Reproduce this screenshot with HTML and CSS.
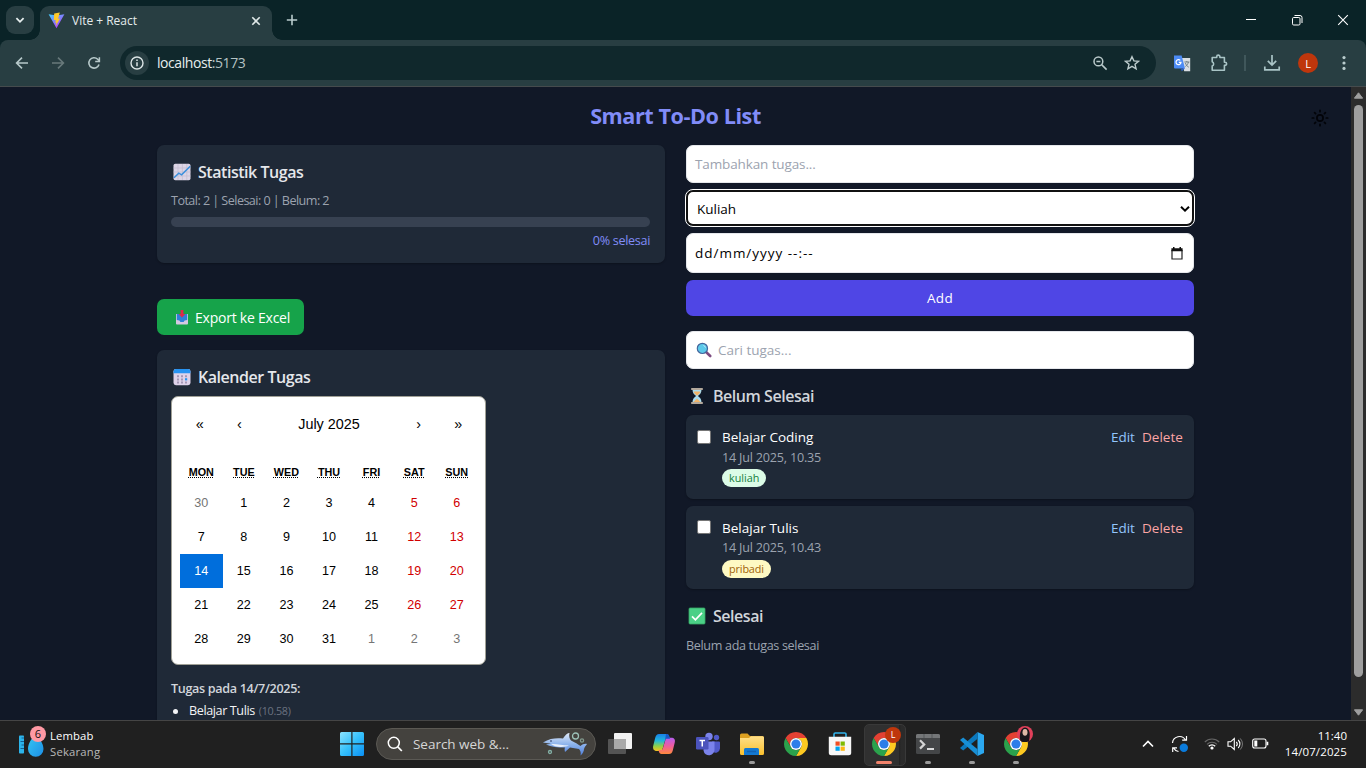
FILE: index.html
```html
<!DOCTYPE html>
<html lang="id">
<head>
<meta charset="utf-8">
<title>Vite + React</title>
<link rel="stylesheet" href="styles.css">
</head>
<body>
<svg class="defs" aria-hidden="true">
  <defs>
    <linearGradient id="win" x1="0" y1="0" x2="1" y2="1"><stop offset="0" stop-color="#8be4ff"/><stop offset=".5" stop-color="#35c0fb"/><stop offset="1" stop-color="#0a8ff5"/></linearGradient>
    <linearGradient id="vite" x1="0" y1="0" x2=".7" y2="1"><stop offset="0" stop-color="#41d1ff"/><stop offset="1" stop-color="#bd34fe"/></linearGradient>
    <linearGradient id="folder" x1="0" y1="0" x2="0" y2="1"><stop offset="0" stop-color="#ffe08a"/><stop offset="1" stop-color="#fbc02d"/></linearGradient>
    <linearGradient id="copA" x1="0" y1="0" x2="0" y2="1"><stop offset="0" stop-color="#1780e8"/><stop offset=".4" stop-color="#21b8dc"/><stop offset=".7" stop-color="#8bd04c"/><stop offset="1" stop-color="#f6c21c"/></linearGradient>
    <linearGradient id="copB" x1="0" y1="0" x2="0" y2="1"><stop offset="0" stop-color="#b55df0"/><stop offset=".5" stop-color="#ef5c9f"/><stop offset="1" stop-color="#ff8a3c"/></linearGradient>
    <linearGradient id="shark" x1="0" y1="0" x2="0" y2="1"><stop offset="0" stop-color="#dfe9f8"/><stop offset=".5" stop-color="#8eb4ec"/><stop offset="1" stop-color="#4f7fdb"/></linearGradient>
    <linearGradient id="drop" x1="0" y1="0" x2="1" y2="1"><stop offset="0" stop-color="#37c8f2"/><stop offset="1" stop-color="#1c8ee6"/></linearGradient>
    <symbol id="chrome" viewBox="0 0 24 24">
      <path fill="#e34133" d="M12 6h10.39A12 12 0 0 0 1.61 6L6.8 15A6 6 0 0 1 12 6z"/>
      <path fill="#fdc921" d="M22.39 6H12a6 6 0 0 1 5.2 9L12 24A12 12 0 0 0 22.39 6z"/>
      <path fill="#2ba24c" d="M6.8 15L1.61 6A12 12 0 0 0 12 24l5.2-9A6 6 0 0 1 6.8 15z"/>
      <circle cx="12" cy="12" r="6" fill="#fff"/><circle cx="12" cy="12" r="4.6" fill="#2d7de9"/>
    </symbol>
  </defs>
</svg>

<header class="tabstrip">
  <button class="tab-search"><svg width="10" height="10" viewBox="0 0 10 10"><path d="M1.4 3.2L5 6.8l3.6-3.6" fill="none" stroke="#e6eeee" stroke-width="1.8"/></svg></button>
  <div class="tab">
    <svg width="17" height="17" viewBox="0 0 17 17"><path d="M.6 2.2L8.5 16.3 16.4 2.2 8.6 3.6z" fill="url(#vite)"/><path d="M11.8.4L6.2 1.5l-.4 6.7 2-.4-.6 3 1.3-.4-.8 3.9 4.3-7.8-1.9.3z" fill="#ffc928"/></svg>
    <span class="tab-title">Vite + React</span>
    <svg class="tab-close" width="10" height="10" viewBox="0 0 10 10"><path d="M1.3 1.3l7.4 7.4M8.7 1.3L1.3 8.7" stroke="#dfe8e8" stroke-width="1.6"/></svg>
  </div>
  <svg class="new-tab" width="12" height="12" viewBox="0 0 12 12"><path d="M6 .8v10.4M.8 6h10.4" stroke="#b9cccd" stroke-width="1.6"/></svg>
  <div class="win-buttons">
    <svg width="46" height="40" viewBox="0 0 46 40"><path d="M18 19.5h10" stroke="#fff"/></svg>
    <svg width="46" height="40" viewBox="0 0 46 40"><rect x="18.5" y="17.5" width="7.5" height="7.5" rx="1.2" fill="none" stroke="#fff"/><path d="M20.5 15.5h5.5a2 2 0 0 1 2 2v5.5" fill="none" stroke="#fff"/></svg>
    <svg width="46" height="40" viewBox="0 0 46 40"><path d="M18.2 15.2l9.6 9.6M27.8 15.2l-9.6 9.6" stroke="#fff" stroke-width="1.1"/></svg>
  </div>
</header>

<nav class="toolbar">
  <svg class="tool" width="36" height="36" viewBox="0 0 36 36"><path d="M24 18H13M18 12.6L12.6 18l5.4 5.4" fill="none" stroke="#b7c9ca" stroke-width="1.6"/></svg>
  <svg class="tool" width="36" height="36" viewBox="0 0 36 36"><path d="M12 18h11M18 12.6l5.4 5.4-5.4 5.4" fill="none" stroke="#68797b" stroke-width="1.6"/></svg>
  <svg class="tool" width="36" height="36" viewBox="0 0 36 36"><path d="M23 19.5a5.2 5.2 0 1 1-1.3-5.3l1.3 1.4" fill="none" stroke="#b7c9ca" stroke-width="1.6"/><path d="M23.4 12.2v4.2h-4.2" fill="none" stroke="#b7c9ca" stroke-width="1.5"/></svg>
  <div class="omnibox">
    <span class="site-info"><svg width="14" height="14" viewBox="0 0 14 14"><circle cx="7" cy="7" r="6" fill="none" stroke="#dce5e6" stroke-width="1.4"/><path d="M7 6.2v4M7 3.6v1.5" stroke="#dce5e6" stroke-width="1.5"/></svg></span>
    <span class="url">localhost<i>:5173</i></span>
    <svg class="zoomed" width="16" height="16" viewBox="0 0 16 16"><circle cx="6.4" cy="6.4" r="4.4" fill="none" stroke="#b9c9ca" stroke-width="1.5"/><path d="M9.600 9.600l5 5M4.400 6.400h4" stroke="#b9c9ca" stroke-width="1.5"/></svg>
    <svg class="star" width="16" height="16" viewBox="0 0 16 16"><path d="M8 1.700l1.900 4.200 4.600.4-3.500 3 1.100 4.500L8 11.400l-4.100 2.400L5 9.300l-3.500-3 4.600-.4z" fill="none" stroke="#bdcccd" stroke-width="1.400"/></svg>
  </div>
  <svg class="ext-translate" width="17" height="17" viewBox="0 0 17 17"><path d="M7 3h9.200v13.200h-6z" fill="#d9dee2"/><path d="M0 .6h7.600L11 13.400H1a1 1 0 0 1-1-1z" fill="#4c8bf5"/><path d="M11 13.400l-3.300 2.800-.8-2.800z" fill="#2b5fc4"/><path d="M6.300 5.400A2.500 2.500 0 1 0 7 7.400H4.800" fill="none" stroke="#fff" stroke-width="1.200"/><path d="M10.400 7h5M12.800 6v1M14.400 7c-.4 2-1.600 3.600-3 4.400M11.400 8c.6 2 2 3.500 3.400 4.200" fill="none" stroke="#66777d" stroke-width=".9"/></svg>
  <svg class="ext-puzzle" width="18" height="18" viewBox="0 0 18 18"><path d="M2.200 3.500h4.500v-.8a1.600 1.600 0 0 1 3.200 0v.8h4.500v4.700h.6a1.600 1.600 0 0 1 0 3.200h-.6v4.800H2.200v-4.100a2.400 2.400 0 0 0 0-4.400z" fill="none" stroke="#a9c4c6" stroke-width="1.600" stroke-linejoin="round"/></svg>
  <span class="divider"></span>
  <svg class="download" width="18" height="18" viewBox="0 0 18 18"><path d="M9 1v9.600M4.800 6.800L9 11l4.200-4.200M1.800 12.500v3.300h14.400v-3.300" fill="none" stroke="#a9c4c6" stroke-width="1.700"/></svg>
  <span class="avatar">L</span>
  <svg class="kebab" width="4" height="16" viewBox="0 0 4 16" fill="#b9cccd"><circle cx="2" cy="2.600" r="1.600"/><circle cx="2" cy="8" r="1.600"/><circle cx="2" cy="13.400" r="1.600"/></svg>
</nav>

<div class="viewport">
  <main class="page">
    <h1>Smart To-Do List</h1>
    <svg class="theme" width="18" height="18" viewBox="0 0 18 18" fill="none" stroke="#020308" stroke-width="1.700" stroke-linecap="round"><circle cx="9" cy="9" r="3.100"/><path d="M9 1.300v1.400M9 15.300v1.400M1.300 9h1.400M15.300 9h1.400M3.600 3.600l1 1M13.400 13.400l1 1M3.600 14.400l1-1M13.400 4.600l1-1"/></svg>
    <div class="columns">
      <section class="col">
        <div class="card stats">
          <h2><svg width="18" height="18" viewBox="0 0 18 18"><rect x=".5" y=".8" width="17" height="16.400" rx="1.800" fill="#dcd5e6"/><path d="M5 1v16M9.400 1v16M13.800 1v16M.5 5h17M.5 9h17M.5 13h17" stroke="#c3bbd0" stroke-width=".7"/><path d="M1 14.800l4.800-4.600 2.800 1.600 8.600-8.600" fill="none" stroke="#3a8fdc" stroke-width="1.500"/></svg><span>Statistik Tugas</span></h2>
          <p class="totals">Total: 2 | Selesai: 0 | Belum: 2</p>
          <div class="progress"></div>
          <p class="percent">0% selesai</p>
        </div>
        <button class="export"><svg width="14" height="16" viewBox="0 0 14 16"><path d="M1 5h12v9.600a.9.900 0 0 1-.9.900H1.900a.9.900 0 0 1-.9-.9z" fill="#d3c8e2"/><path d="M1.800 5h10.400v6l-2.600.4-1 1.600H5.400l-1-1.600-2.600-.4z" fill="#2e80d8"/><path d="M5.600 1h2.800v4h1.900L7 8.400 3.700 5h1.900z" fill="#e0284c"/></svg><span>Export ke Excel</span></button>
        <div class="card agenda">
          <h2><svg width="18" height="18" viewBox="0 0 18 18"><rect x=".5" y="1" width="17" height="16.200" rx="2.400" fill="#ded2ea"/><path d="M.5 5.200V3.400A2.400 2.400 0 0 1 2.900 1h12.200a2.400 2.400 0 0 1 2.400 2.400v1.800z" fill="#2793f2"/><g fill="#a497b6"><path d="M4 7.200h2v2H4zM8 7.200h2v2H8zM12 7.200h2v2h-2zM4 10.400h2v2H4zM8 10.400h2v2H8zM4 13.600h2v2H4zM8 13.600h2v2H8zM12 13.600h2v2h-2z"/></g><path d="M12 10.200h2.200v2.200H12z" fill="#2793f2"/></svg><span>Kalender Tugas</span></h2>
          <div class="calendar">
            <div class="cal-nav"><button>«</button><button>‹</button><b>July 2025</b><button>›</button><button>»</button></div>
            <div class="weekdays"><span><abbr>MON</abbr></span><span><abbr>TUE</abbr></span><span><abbr>WED</abbr></span><span><abbr>THU</abbr></span><span><abbr>FRI</abbr></span><span><abbr>SAT</abbr></span><span><abbr>SUN</abbr></span></div>
            <div class="days">
              <span class="out">30</span><span>1</span><span>2</span><span>3</span><span>4</span><span class="we">5</span><span class="we">6</span>
              <span>7</span><span>8</span><span>9</span><span>10</span><span>11</span><span class="we">12</span><span class="we">13</span>
              <span class="sel">14</span><span>15</span><span>16</span><span>17</span><span>18</span><span class="we">19</span><span class="we">20</span>
              <span>21</span><span>22</span><span>23</span><span>24</span><span>25</span><span class="we">26</span><span class="we">27</span>
              <span>28</span><span>29</span><span>30</span><span>31</span><span class="out">1</span><span class="out">2</span><span class="out">3</span>
            </div>
          </div>
          <h3>Tugas pada 14/7/2025:</h3>
          <ul><li><span class="li-name">Belajar Tulis</span> <small>(10.58)</small></li></ul>
        </div>
      </section>

      <section class="col">
        <div class="field add-task">Tambahkan tugas...</div>
        <div class="field category"><span>Kuliah</span><svg width="10" height="8" viewBox="0 0 10 8"><path d="M1 1.800l4 3.800 4-3.800" fill="none" stroke="#000" stroke-width="2"/></svg></div>
        <div class="field date"><span>dd/mm/yyyy --:--</span><svg width="12" height="13" viewBox="0 0 12 13"><path d="M1 3v9h10V3" fill="none" stroke="#222" stroke-width="1.200"/><path d="M.4 1.200h11.200v3H.4zM2 0h1.500v2H2zM8.500 0H10v2H8.500z" fill="#111"/></svg></div>
        <button class="add">Add</button>
        <div class="field search"><svg width="16" height="16" viewBox="0 0 16 16"><path d="M9.800 9.800l4.400 4.200" stroke="#7d4b80" stroke-width="2.600" stroke-linecap="round"/><circle cx="6.400" cy="6.400" r="5.100" fill="#5cc9ea" stroke="#44669c" stroke-width="1.200"/><path d="M7.500 3.500a3 3 0 0 1 2 2" stroke="#c2f0fb" fill="none"/></svg><span>Cari tugas...</span></div>
        <h2 class="pending"><svg width="18" height="18" viewBox="0 0 18 18"><path d="M4.500 2.500h9c0 3.500-1.500 4.800-3.600 6.500 2.100 1.700 3.600 3 3.600 6.500h-9C4.500 12 6 10.700 8.100 9 6 7.300 4.500 6 4.500 2.500z" fill="#a9dcf0"/><path d="M5.500 4.500h7c-.6 2-2 3-3.500 4.200C7.500 7.500 6.100 6.500 5.500 4.500zM9 11.500l3.600 3.500H5.400z" fill="#f2b56b"/><path d="M3.200 1h11.600v2H3.200zM3.200 15h11.600v2H3.200z" fill="#b3a89c"/></svg><span>Belum Selesai</span></h2>
        <article class="task first">
          <i class="check"></i>
          <div class="info"><p class="name">Belajar Coding</p><p class="when">14 Jul 2025, 10.35</p><span class="tag green">kuliah</span></div>
          <a class="edit">Edit</a><a class="delete">Delete</a>
        </article>
        <article class="task">
          <i class="check"></i>
          <div class="info"><p class="name">Belajar Tulis</p><p class="when">14 Jul 2025, 10.43</p><span class="tag yellow">pribadi</span></div>
          <a class="edit">Edit</a><a class="delete">Delete</a>
        </article>
        <h2 class="done"><svg width="18" height="18" viewBox="0 0 18 18"><rect x="1" y="1" width="16" height="16" rx="1" fill="#4bd087" stroke="#35a866" stroke-width=".8"/><path d="M4 9.400l3.400 3.400L14 5.800" fill="none" stroke="#fff" stroke-width="1.700"/></svg><span>Selesai</span></h2>
        <p class="empty">Belum ada tugas selesai</p>
      </section>
    </div>
  </main>
  <aside class="scrollbar">
    <svg width="9" height="7" viewBox="0 0 9 7"><path d="M4.500.8L8.600 6.200H.4z" fill="#9f9f9f" stroke="#9f9f9f" stroke-linejoin="round"/></svg>
    <i class="thumb"></i>
    <svg width="9" height="7" viewBox="0 0 9 7"><path d="M4.500 6.200L8.600.8H.4z" fill="#9f9f9f" stroke="#9f9f9f" stroke-linejoin="round"/></svg>
  </aside>
</div>

<footer class="taskbar">
  <div class="weather">
    <svg width="30" height="34" viewBox="0 0 30 34"><rect x="1" y="8.500" width="5" height="18" rx=".8" fill="#2cb4ea"/><path d="M3.500 11H6M2.500 14.500H6M3.500 18H6M2.500 21.500H6" stroke="#155e92" stroke-width="1"/><path d="M17.500 7c3 4 8 8.500 8 15a7.500 7.500 0 0 1-15.500 0c0-6.500 4.500-11 7.500-15z" fill="url(#drop)"/></svg>
    <b class="count">6</b>
    <div><p class="w1">Lembab</p><p class="w2">Sekarang</p></div>
  </div>
  <span class="slot start"><svg width="24" height="24" viewBox="0 0 24 24"><path d="M0 1.500A1.500 1.500 0 0 1 1.500 0h9.800v11.300H0zM12.500 0h10A1.500 1.500 0 0 1 24 1.500v9.800H12.500zM0 12.500h11.300V24H1.500A1.500 1.500 0 0 1 0 22.500zM12.500 12.500H24v10a1.500 1.500 0 0 1-1.500 1.500h-10z" fill="url(#win)"/></svg></span>
  <div class="searchbox">
    <svg width="16" height="16" viewBox="0 0 16 16"><circle cx="6.800" cy="6.800" r="5.500" fill="none" stroke="#fff" stroke-width="1.500"/><path d="M10.800 10.800l4 4.200" stroke="#fff" stroke-width="1.700"/></svg>
    <span>Search web &amp;...</span>
    <svg class="shark" width="48" height="26" viewBox="0 0 48 26"><path d="M2 11.500C9 7 16 7 22 7.500 25 3 27 2 28.500 2c-.8 3 0 5.500 1.500 7.500 4 1.800 7 4 9.500 5.500 2-2 4.500-2.500 6.500-2-1.500 2-2.500 3.300-3 5 0 2-1 4.500-3.500 6.500.8-3-.2-5-1.500-6.500-3-.6-6-.8-9-1.500l-5 4.500c-.5-2-.5-3.200 0-4.500C17 16.500 10 16 5 13.500l5-.8z" fill="url(#shark)"/><path d="M10 13c5-.5 11 1 18 1.500-7 2.500-14 1.500-18-1.500z" fill="#e9f0fb"/><circle cx="10" cy="10" r=".8" fill="#1c2a50"/><g fill="none" stroke-width="1.300"><circle cx="34.500" cy="5" r="3" stroke="#9cc1b7"/><circle cx="41" cy="9.500" r="1.600" stroke="#82998d"/><circle cx="9" cy="21" r="1.500" stroke="#84b1a7"/></g></svg>
  </div>
  <span class="slot"><svg width="24" height="24" viewBox="0 0 24 24"><rect x="6" y="1" width="18" height="16" rx="1" fill="#f2f2f2"/><rect x="0" y="7" width="18" height="15" rx="1" fill="#5e5e5e" fill-opacity=".85"/><path d="M6 7h12v10H6z" fill="#a9a9a9"/></svg></span>
  <span class="slot"><svg width="24" height="24" viewBox="0 0 24 24"><path d="M7 2h7.500c1.500 0 2.200 1 2.600 2.400l.6 2.300h-2.300c-1.300 0-2 .6-2.400 1.900L10.500 17c-.5 1.300-1 2-2.700 2H5C1.500 19 .5 16.500 1.300 13.500l2-8C4 3.200 5 2 7 2z" fill="url(#copA)"/><path d="M17 22H9.500c-1.500 0-2.200-1-2.600-2.400l-.5-1.600h2.300c1.300 0 1.900-.8 2.300-2.100L13.500 7.500c.5-1.300 1-1.800 2.700-1.800H19c3.500 0 4.500 2 3.700 5l-2 8C20 21 19 22 17 22z" fill="url(#copB)"/><path d="M14 2h1c1.500 0 2 1 2.400 2.400l.6 2.300h-3c-1.300 0-1.700.6-2 1.600z" fill="#1858c7"/></svg></span>
  <span class="slot"><svg width="24" height="24" viewBox="0 0 24 24"><circle cx="20.500" cy="5.500" r="2.700" fill="#5059c9"/><circle cx="13" cy="4.500" r="3.700" fill="#7b83eb"/><path d="M16 9.500h7a1 1 0 0 1 1 1V16a4.500 4.500 0 0 1-8 3z" fill="#5059c9"/><path d="M8 9.500h10.500v7.500a5.500 5.500 0 0 1-11 1.500z" fill="#7b83eb"/><rect x="0" y="5" width="12.500" height="12.500" rx="1.200" fill="#4b53bc"/><path d="M3.500 8.500H9M6.250 8.500V14.500" stroke="#fff" stroke-width="1.500"/></svg></span>
  <span class="slot run"><svg width="26" height="24" viewBox="0 0 26 24"><path d="M1 3a1.500 1.500 0 0 1 1.500-1.500h6L11 4h12.500A1.500 1.500 0 0 1 25 5.500V9H1z" fill="#dca020"/><path d="M1 6h9l2-1.800h11.500A1.500 1.500 0 0 1 25 5.700V21.500a1.500 1.500 0 0 1-1.500 1.500h-21A1.500 1.500 0 0 1 1 21.500z" fill="url(#folder)"/><path d="M5 23v-5.500A1.500 1.500 0 0 1 6.500 16h12a1.500 1.500 0 0 1 1.500 1.500V23z" fill="#1479d2"/><path d="M8 19.500h9" stroke="#1262b3" stroke-width="1.500"/></svg></span>
  <span class="slot"><svg width="24" height="24"><use href="#chrome"/></svg></span>
  <span class="slot"><svg width="24" height="24" viewBox="0 0 24 24"><path d="M6 5.500V2.200A1.200 1.200 0 0 1 7.200 1h9.600A1.200 1.200 0 0 1 18 2.200v3.300" fill="none" stroke="#32b4ec" stroke-width="1.600"/><path d="M.8 4.800h22.400v16a2.500 2.500 0 0 1-2.500 2.500H3.300a2.500 2.500 0 0 1-2.500-2.500z" fill="#f7f7f7"/><path d="M7.500 9.500h4.200v4.200H7.500z" fill="#f04e23"/><path d="M12.600 9.500h4.200v4.200h-4.200z" fill="#7fba00"/><path d="M7.500 14.600h4.200v4.200H7.500z" fill="#00a3ee"/><path d="M12.600 14.600h4.200v4.200h-4.200z" fill="#fdb813"/></svg></span>
  <span class="slot active"><svg width="24" height="24"><use href="#chrome"/></svg><b class="profile">L</b></span>
  <span class="slot run"><svg width="24" height="20" viewBox="0 0 24 20"><rect width="24" height="20" rx="1.500" fill="#444648"/><path d="M0 4V1.500A1.500 1.500 0 0 1 1.500 0h21A1.500 1.500 0 0 1 24 1.500V4z" fill="#747678"/><path d="M8 0v4M16 0v4" stroke="#55585a"/><path d="M4 6.200l4.200 4.200L4 14.600" fill="none" stroke="#d5d5d5" stroke-width="2.200"/><path d="M11 15h7" stroke="#fff" stroke-width="1.600"/></svg></span>
  <span class="slot run"><svg width="24" height="24" viewBox="0 0 24 24"><path d="M17.500 0L24 3v18l-6.500 3z" fill="#2ba8f0"/><path d="M17.500 0v6.800L3.200 18.500 0 16z" fill="#0b78bd"/><path d="M17.500 24v-6.800L3.200 5.500 0 8z" fill="#188fd6"/></svg></span>
  <span class="slot run"><svg width="24" height="24"><use href="#chrome"/></svg><svg class="photo" width="16" height="16" viewBox="0 0 16 16"><circle cx="8" cy="8" r="8" fill="#e1405a"/><path d="M3.500 15C2 10 3 2 8 1.500c5 .5 5.500 7 4 13.500a8 8 0 0 1-8.500 0z" fill="#17151a"/><ellipse cx="8" cy="6.300" rx="2.500" ry="3.400" fill="#dcb7a6"/></svg></span>
  <div class="tray">
    <svg class="up" width="12" height="8" viewBox="0 0 12 8"><path d="M1 6.500L6 1.500l5 5" fill="none" stroke="#fff" stroke-width="1.600"/></svg>
    <svg class="sync" width="18" height="18" viewBox="0 0 18 18"><path d="M1.500 8A7 7 0 0 1 14.500 5M15.500 1v4.200h-4.300M7.500 16.500A7 7 0 0 1 2.500 13M1.700 17v-4.200H6" fill="none" stroke="#fff" stroke-width="1.200"/><circle cx="12.800" cy="12.800" r="4.200" fill="#0a7bdc"/></svg>
    <svg class="wifi" width="16" height="13" viewBox="0 0 16 13"><path d="M.8 5a10.200 10.200 0 0 1 14.400 0M3 7.300a7 7 0 0 1 10 0" fill="none" stroke="#676767" stroke-width="1.100"/><path d="M4.800 9.200a4.500 4.500 0 0 1 6.400 0" fill="none" stroke="#fff" stroke-width="1.300"/><circle cx="8" cy="11" r="1.600" fill="#fff"/></svg>
    <svg class="sound" width="17" height="14" viewBox="0 0 17 14"><path d="M1 4.800h2.600L7.300 1.500v11L3.600 9.200H1zM9.300 4.800a3.300 3.300 0 0 1 0 4.400M11.200 3a5.600 5.600 0 0 1 0 8" fill="none" stroke="#fff" stroke-width="1.100"/><path d="M13.200 1.400a8 8 0 0 1 0 11.200" fill="none" stroke="#777"/></svg>
    <svg class="battery" width="17" height="11" viewBox="0 0 17 11"><rect x=".7" y="1" width="13.300" height="9" rx="2" fill="none" stroke="#fff" stroke-width="1.100"/><path d="M2.300 2.600h3v5.800h-3zM14.600 3.800h1.700v3.400h-1.700z" fill="#fff"/></svg>
    <div class="clock"><p class="time">11:40</p><p>14/07/2025</p></div>
  </div>
</footer>
</body>
</html>
```
FILE: styles.css
```css
* { box-sizing: border-box; }
body { margin: 0; width: 1366px; height: 768px; overflow: hidden; background: #0a2327; font-family: "Open Sans", "Noto Sans", sans-serif; font-size: 14px; color: #fff; }
h1, h2, h3, p, ul { margin: 0; padding: 0; }
button { border: 0; padding: 0; font: inherit; color: inherit; background: none; }
svg { display: block; flex: none; }
.defs { position: absolute; width: 0; height: 0; }

/* Browser frame */
.tabstrip { display: flex; height: 40px; background: #0a2327; }
.tab-search { display: flex; align-items: center; justify-content: center; width: 28px; height: 28px; margin: 6px 6px 0; border-radius: 9px; background: #283e42; }
.tab { position: relative; display: flex; align-items: center; width: 232px; margin-top: 6px; padding: 0 11px 5px 8px; border-radius: 9px 9px 0 0; background: #283e42; }
.tab::before, .tab::after { content: ""; position: absolute; bottom: 0; width: 10px; height: 10px; }
.tab::before { left: -10px; background: radial-gradient(circle at 0 0, transparent 9.5px, #283e42 10px); }
.tab::after { right: -10px; background: radial-gradient(circle at 100% 0, transparent 9.5px, #283e42 10px); }
.tab-title { flex: 1; margin-left: 7px; font-size: 12px; letter-spacing: -.02px; color: #e4ebeb; }
.new-tab { margin: 14px 0 0 14px; }
.win-buttons { display: flex; margin-left: auto; }
.toolbar { display: flex; align-items: center; height: 47px; padding: 0 20px 0 4px; background: #283e42; border-bottom: 1px solid #454b4d; border-radius: 8px 8px 0 0; }
.omnibox { display: flex; align-items: center; width: 1036px; height: 34px; margin-left: 8px; padding: 0 16px 0 5px; border-radius: 17px; background: #10282c; }
.site-info { display: flex; align-items: center; justify-content: center; width: 24px; height: 24px; border-radius: 50%; background: #283e42; }
.url { flex: 1; margin-left: 8px; padding-bottom: 2px; font-size: 14px; letter-spacing: -.43px; color: #e6eeee; }
.url i { font-style: normal; color: #b5c3c4; }
.star { margin-left: 16px; }
.ext-translate { margin-left: 18px; }
.ext-puzzle { margin-left: 19px; }
.divider { width: 2px; height: 16px; margin-left: 16px; background: #40575b; }
.download { margin-left: 17px; }
.toolbar .avatar { display: flex; align-items: center; justify-content: center; width: 20px; height: 20px; margin-left: 17px; border-radius: 50%; background: #bf360c; font-size: 11px; }
.kebab { margin-left: 24px; }

/* Page */
.viewport { display: flex; height: 633px; }
.page { position: relative; flex: 1; overflow: hidden; padding: 13px 157px 0; background: #111827; }
h1 { height: 45px; line-height: 31px; text-align: center; font-size: 21.600px; font-weight: 700; letter-spacing: -.43px; color: #818cf8; }
.theme { position: absolute; top: 22px; right: 22px; }
.columns { display: grid; grid-template-columns: 508px 508px; gap: 21px; }
.col { display: flex; flex-direction: column; align-items: stretch; }
.card { border-radius: 7px; background: #1f2937; box-shadow: 0 1px 2px rgba(0,0,0,.25); }
h2 { display: flex; align-items: center; height: 26px; font-size: 16px; font-weight: 600; letter-spacing: -.46px; color: #e5e7eb; }
h2 svg { margin: 0 7px 0 2px; }
.stats { height: 118px; padding: 14px; }
.totals { margin-top: 6px; line-height: 19px; font-size: 12.600px; letter-spacing: -.55px; color: #9ca3af; }
.progress { width: 479px; height: 10px; margin-top: 7px; border-radius: 5px; background: #374151; }
.percent { margin-top: 5px; padding-right: 1px; line-height: 18px; text-align: right; font-size: 12.600px; letter-spacing: -.32px; color: #818cf8; }
.export { display: flex; align-items: center; width: 147px; height: 36px; margin-top: 36px; padding-left: 18px; border-radius: 7px; background: #16a34a; font-size: 14px; letter-spacing: -.23px; }
.export span { margin-left: 6px; padding-top: 1px; white-space: nowrap; }
.agenda { height: 400px; margin-top: 15px; padding: 14px; }
.calendar { width: 315px; height: 269px; margin-top: 6px; padding: 7px 7px 8px 8px; border: 1px solid #a0a096; border-radius: 7px; background: #fff; font-family: "Liberation Sans", Arial, sans-serif; font-size: 12.600px; color: #000; }
.cal-nav { display: flex; align-items: center; height: 39px; margin-bottom: 14px; font-size: 14.400px; }
.cal-nav button { width: 39.600px; }
.cal-nav b { flex: 1; text-align: center; font-weight: 400; }
.weekdays, .days { display: grid; grid-template-columns: repeat(7, 1fr); text-align: center; }
.weekdays { height: 29px; line-height: 31px; font-size: 10.800px; font-weight: 700; }
.weekdays abbr { text-decoration: underline dotted; }
.days span { height: 34px; line-height: 34px; }
.days .we { color: #d10000; }
.days .out { color: #757575; }
.days .sel { background: #006edc; color: #fff; }
h3 { margin-top: 14px; line-height: 20px; font-size: 12.600px; font-weight: 600; letter-spacing: -.33px; color: #d1d5db; }
ul { list-style: none; margin-top: 3px; line-height: 18px; font-size: 12.600px; color: #f3f4f6; }
li { display: flex; align-items: center; gap: 4px; }
li::before { content: ""; width: 5px; height: 5px; margin: 0 7px 0 2px; border-radius: 50%; background: #f3f4f6; }
.li-name { letter-spacing: -.4px; }
small { font-size: 10.800px; letter-spacing: -.3px; color: #6b7280; }

/* Form */
.field { display: flex; align-items: center; justify-content: space-between; height: 38px; padding: 0 9px 0 8px; border: 1px solid #e5e7eb; border-radius: 7px; background: #fff; font-size: 13.500px; color: #000; }
.add-task { color: #9ca3af; justify-content: flex-start; letter-spacing: -.12px; }
.category { height: 36px; margin-top: 7px; padding: 1px 2px 0 9px; border: 2px solid #111; outline: 1px solid #fff; border-radius: 7px; }
.date { height: 40px; margin-top: 7px; padding-right: 10px; }
.date span { letter-spacing: .98px; }
.add { height: 36px; margin-top: 7px; border-radius: 7px; background: #4f46e5; font-size: 13.500px; letter-spacing: .3px; }
.search { margin-top: 15px; padding-left: 9px; justify-content: flex-start; gap: 6px; color: #9ca3af; }
.pending { height: 28px; margin-top: 13px; color: #d1d5db; }
.done { height: 28px; margin-top: 13px; color: #d1d5db; }
.task { display: flex; height: 83px; margin-top: 7px; padding: 12px 11px 0; border-radius: 7px; background: #1f2937; box-shadow: 0 1px 2px rgba(0,0,0,.25); line-height: 20px; }
.task.first { height: 84px; margin-top: 5px; }
.check { width: 14px; height: 14px; margin: 2px 11px 0 0; border: 1px solid #767676; border-radius: 2px; background: #fff; }
.first .check { margin-top: 3px; }
.info { flex: 1; }
.name { font-size: 13.500px; letter-spacing: .03px; }
.when { font-size: 12.600px; letter-spacing: -.2px; color: #9ca3af; }
.first .when { padding-top: 1px; line-height: 19px; }
.tag { display: block; width: max-content; height: 18px; margin-top: 2px; padding: 0 7px; border-radius: 9px; line-height: 17px; font-size: 10.800px; }
.green { background: #dcfce7; color: #15803d; }
.yellow { background: #fef9c3; color: #a16207; letter-spacing: -.12px; }
.edit { color: #93c5fd; font-size: 13.500px; }
.delete { margin-left: 7px; color: #fca5a5; font-size: 13.500px; letter-spacing: .05px; }
.empty { margin-top: 6px; line-height: 20px; font-size: 12.600px; letter-spacing: -.34px; color: #9ca3af; }
.scrollbar { display: flex; flex-direction: column; align-items: center; width: 15px; padding: 5px 0 4px; background: #2c2c2c; }
.thumb { width: 9px; height: 572px; margin: 6px 0 auto; border-radius: 5px; background: #9f9f9f; }

/* Taskbar */
.taskbar { display: flex; align-items: center; height: 48px; padding-bottom: 2px; border-top: 1px solid #454545; background: #202020; }
.weather { position: relative; display: flex; align-items: center; width: 329.500px; padding-left: 18px; font-size: 11.300px; line-height: 16px; }
.weather div { margin-left: 2px; }
.w1 { letter-spacing: .1px; }
.w2 { color: #b9b9b9; letter-spacing: .2px; }
.count { position: absolute; left: 30px; top: -1px; width: 16px; height: 16px; border-radius: 50%; background: #ff99a4; color: #111; text-align: center; font-size: 11px; font-weight: 400; line-height: 16px; }
.slot { position: relative; display: flex; align-items: center; justify-content: center; flex: none; width: 44px; height: 45px; }
.slot.start { margin-right: 2.500px; }
.run::after, .active::after { content: ""; position: absolute; bottom: 2px; width: 6px; height: 3px; border-radius: 2px; background: #9a9a9a; }
.active::before { content: ""; position: absolute; z-index: -1; left: 2px; top: 3px; width: 40px; height: 40px; border: 1px solid #393939; border-radius: 5px; background: linear-gradient(90deg, #303030 34px, #222 34px, #2b2b2b 36px); }
.active { z-index: 0; }
.active::after { width: 16px; background: #f2836c; }
.profile { position: absolute; left: 23px; top: 6px; width: 16px; height: 16px; border-radius: 50%; background: #bf360c; text-align: center; line-height: 16px; font-size: 9px; font-weight: 400; }
.photo { position: absolute; left: 23px; top: 5px; }
.searchbox { display: flex; align-items: center; width: 220px; height: 32px; margin-right: 2px; padding: 0 6px 0 10px; border: 1px solid #5b5954; border-radius: 16px; background: #44423e; font-size: 13.500px; color: #d6d6d6; }
.searchbox span { flex: 1; margin-left: 10px; white-space: nowrap; letter-spacing: -.03px; }
.tray { display: flex; align-items: center; margin-left: auto; padding-right: 19px; }
.up { margin-right: -1px; }
.sync { margin-left: 18px; }
.wifi { margin-left: 15px; }
.sound { margin-left: 7px; }
.battery { margin-left: 8px; }
.clock { width: 66px; margin-left: 12px; text-align: right; font-size: 11.500px; line-height: 16px; letter-spacing: .12px; white-space: nowrap; }
.time { letter-spacing: 0; }
```
